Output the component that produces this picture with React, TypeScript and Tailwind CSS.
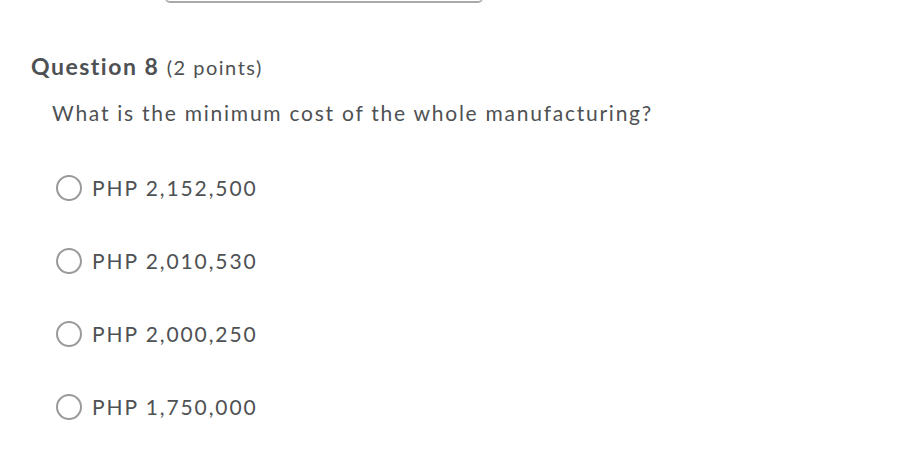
const options = ['PHP 2,152,500', 'PHP 2,010,530', 'PHP 2,000,250', 'PHP 1,750,000'];

export default function App() {
  return (
    <div className="w-[899px] h-[471px] bg-white overflow-hidden text-[#4e5153]" style={{ fontFamily: 'Lato, "Open Sans", sans-serif' }}>
      <div className="ml-[165px] w-[318px] h-[5px] border-b-2 border-x border-[#aaaaaa] rounded-b-[6px] -mt-[2px]" />
      <div className="pl-[31px] pt-[48px]">
        <h2 className="text-[23px] leading-[30px] tracking-[1.5px]">
          <span className="font-bold">Question 8</span>{' '}
          <span className="text-[20px]">(2 points)</span>
        </h2>
        <p className="pl-[21px] mt-[17px] text-[21px] leading-[28px] tracking-[1.75px]">
          What is the minimum cost of the whole manufacturing?
        </p>
        <div className="pl-[25px] mt-[47px] flex flex-col gap-[46px]">
          {options.map((o) => (
            <label key={o} className="flex items-center gap-[10px] h-[27px]">
              <span className="w-[26px] h-[26px] rounded-full border-2 border-[#9a9a9a] bg-white" />
              <span className="text-[21px] leading-[27px] tracking-[1.9px]">{o}</span>
            </label>
          ))}
        </div>
      </div>
    </div>
  );
}
